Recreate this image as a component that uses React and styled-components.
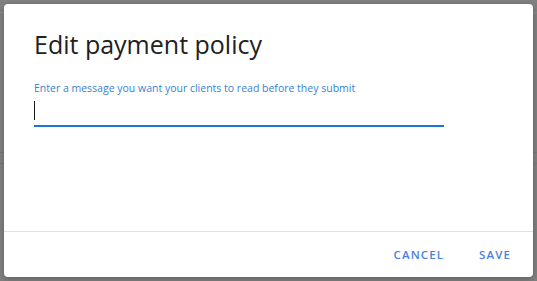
import React from "react";
import styled, { createGlobalStyle } from "styled-components";

const GlobalStyle = createGlobalStyle`
  html, body {
    margin: 0;
    padding: 0;
    background: #808080;
  }
  body {
    font-family: "Open Sans", "Noto Sans", sans-serif;
  }
`;

const Backdrop = styled.div`
  width: 537px;
  height: 281px;
  box-sizing: border-box;
  padding: 4px;
  background: #808080;
  position: relative;
  overflow: hidden;
`;

// faint lines of the page that shows through the overlay
const PageLine = styled.div`
  position: absolute;
  left: 0;
  right: 0;
  top: ${props => props.top}px;
  height: 1px;
  background: ${props => props.color || "#8c8c8c"};
`;

const Dialog = styled.div`
  position: relative;
  height: 100%;
  background: #fff;
  border-radius: 4px;
  display: flex;
  flex-direction: column;
  box-shadow: 0 2px 6px rgba(0, 0, 0, 0.25);
`;

const Body = styled.div`
  flex: 1;
  padding: 24px 30px 0;
`;

const Title = styled.h2`
  margin: 0 0 21px;
  font-size: 25px;
  font-weight: 400;
  line-height: 32px;
  color: #212121;
`;

const Field = styled.label`
  display: flex;
  flex-direction: column;
  width: 410px;
`;

const FieldLabel = styled.span`
  font-size: 10.5px;
  line-height: 14px;
  color: #3a7fd0;
`;

const Input = styled.div`
  height: 30px;
  border-bottom: 2px solid #1976d2;
  display: flex;
  align-items: center;
`;

const Caret = styled.span`
  width: 1px;
  height: 19px;
  background: #1a1a1a;
`;

const Footer = styled.div`
  border-top: 1px solid #e0e0e0;
  height: 45px;
  display: flex;
  align-items: center;
  justify-content: flex-end;
  padding-right: 22px;
  gap: 35px;
`;

const Button = styled.button`
  border: none;
  background: none;
  padding: 0;
  font-family: inherit;
  font-size: 11.5px;
  font-weight: 600;
  letter-spacing: 1.1px;
  color: #4a80e0;
  text-transform: uppercase;
  cursor: pointer;
`;

export default function App() {
  return (
    <>
      <GlobalStyle />
      <Backdrop>
        <PageLine top={12} color="#8a8a8a" />
        <PageLine top={152} color="#777" />
        <PageLine top={163} color="#777" />
        <Dialog>
          <Body>
            <Title>Edit payment policy</Title>
            <Field>
              <FieldLabel>Enter a message you want your clients to read before they submit</FieldLabel>
              <Input>
                <Caret />
              </Input>
            </Field>
          </Body>
          <Footer>
            <Button>Cancel</Button>
            <Button>Save</Button>
          </Footer>
        </Dialog>
      </Backdrop>
    </>
  );
}
